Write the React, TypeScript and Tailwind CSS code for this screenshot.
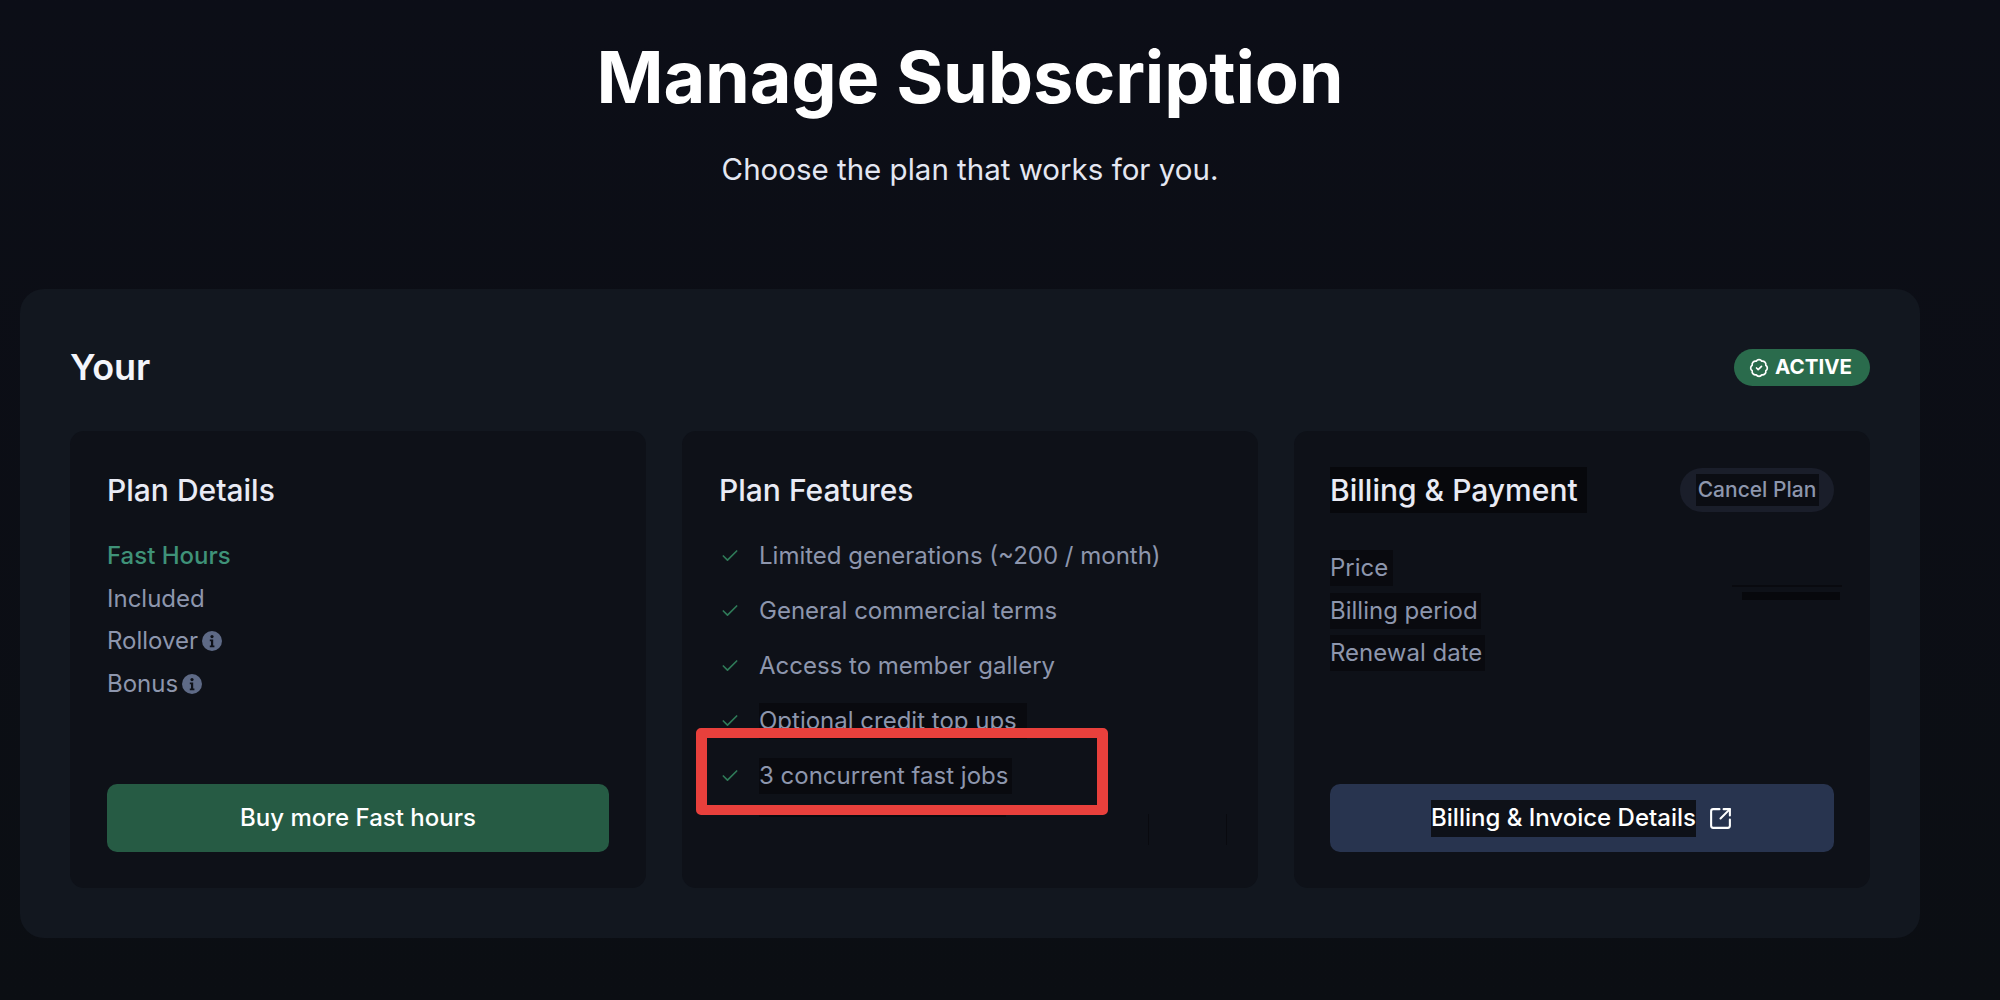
import { BadgeCheck, Check, SquareArrowOutUpRight } from "lucide-react";

const planRows = ["Included", "Rollover", "Bonus"];

const features = [
  { label: "Limited generations (~200 / month)", mark: "" },
  { label: "General commercial terms", mark: "" },
  { label: "Access to member gallery", mark: "" },
  { label: "Optional credit top ups", mark: "bg-[#090a0f] w-[268px] h-[36px] items-start" },
  { label: "3 concurrent fast jobs", mark: "bg-[#090a0f] w-[253px] h-[36px] items-center" },
];

const billingRows = [
  { label: "Price", width: "w-[63px]" },
  { label: "Billing period", width: "w-[151px]" },
  { label: "Renewal date", width: "w-[155px]" },
];

function InfoDot() {
  return (
    <svg viewBox="0 0 20 20" className="h-[20px] w-[20px] shrink-0">
      <circle cx="10" cy="10" r="10" fill="#5e6a86" />
      <circle cx="10" cy="5.6" r="1.6" fill="#0e1118" />
      <path d="M7.8 8.6h3.4v6h1.2v1.6H7.8v-1.6h1.2v-4.4H7.8z" fill="#0e1118" />
    </svg>
  );
}

export default function App() {
  return (
    <div className="relative h-[1000px] w-[2000px] overflow-hidden bg-gradient-to-b from-[#0c0e17] to-[#0b0e13] font-['Inter',sans-serif]">
      {/* Title */}
      <div className="ml-[20px] flex w-[1900px] flex-col items-center pt-[33px]">
        <h1 className="text-[72px] font-bold leading-[88px] tracking-[-0.2px] text-white">Manage Subscription</h1>
        <p className="mt-[30px] text-[29.5px] leading-[36px] text-[#e4e7f2]">Choose the plan that works for you.</p>
      </div>

      {/* Subscription card */}
      <section className="ml-[20px] mt-[102px] h-[649px] w-[1900px] rounded-[24px] bg-[#12171f] px-[50px] pt-[60px]">
        <div className="flex items-center justify-between">
          <h2 className="-translate-y-[1px] text-[36px] font-semibold leading-[36px] text-[#f3f5fb]">Your</h2>
          <div className="flex h-[37px] w-[136px] items-center justify-center gap-[6px] rounded-full bg-[#2a6b4c] pr-[3px] text-[20.5px] font-bold text-white">
            <BadgeCheck className="h-[20px] w-[20px]" strokeWidth={2} />
            ACTIVE
          </div>
        </div>

        <div className="mt-[45px] grid grid-cols-3 gap-[36px]">
          {/* Plan details */}
          <div className="flex h-[457px] flex-col rounded-[14px] bg-[#0e1118] px-[37px] pb-[36px] pt-[41px]">
            <h3 className="text-[30px] font-medium leading-[36px] text-[#e9ebf5]">Plan Details</h3>
            <div className="mt-[27px] flex flex-col text-[24px] leading-[42.6px] text-[#8d96ad]">
              <span className="font-medium text-[#3f9278]">Fast Hours</span>
              {planRows.map((row) => (
                <span key={row} className="flex items-center gap-[4px]">
                  {row}
                  {row !== "Included" && <InfoDot />}
                </span>
              ))}
            </div>
            <button className="mt-auto h-[68px] rounded-[10px] bg-[#265b44] text-[24px] font-medium text-white">
              Buy more Fast hours
            </button>
          </div>

          {/* Plan features */}
          <div className="relative flex h-[457px] flex-col rounded-[14px] bg-[#0e1118] px-[37px] pt-[41px]">
            <h3 className="text-[30px] font-medium leading-[36px] text-[#e9ebf5]">Plan Features</h3>
            <ul className="mt-[20px] flex flex-col text-[24px] text-[#8d96ad]">
              {features.map((item) => (
                <li key={item.label} className="flex h-[55px] items-center">
                  <Check className="ml-[1px] h-[20px] w-[20px] shrink-0 text-[#2f7a58]" strokeWidth={2} />
                  <span className={`ml-[19px] flex whitespace-nowrap leading-[36px] ${item.mark}`}>{item.label}</span>
                </li>
              ))}
            </ul>
            {/* annotation box over the last row */}
            <div className="absolute left-[14px] top-[297px] h-[87px] w-[412px] rounded-[5px] border-x-[11px] border-y-[10px] border-[#e8403c]" />
            <div className="absolute left-[77px] top-[384px] h-[2px] w-[247px] bg-[#090a0f]" />
            <div className="absolute left-[466px] top-[383px] h-[31px] w-[1px] bg-[#090a0f]" />
            <div className="absolute left-[544px] top-[383px] h-[31px] w-[1px] bg-[#090a0f]" />
          </div>

          {/* Billing */}
          <div className="relative flex h-[457px] flex-col rounded-[14px] bg-[#0e1118] px-[36px] pb-[36px] pt-[36px]">
            <div className="flex items-center justify-between">
              <h3 className="flex h-[46px] w-[257px] items-center whitespace-nowrap bg-[#07080c] text-[30px] font-medium text-[#e9ebf5]">
                Billing &amp; Payment
              </h3>
              <button className="flex h-[44px] w-[154px] items-center justify-center rounded-full bg-[#1a1e2a]">
                <span className="flex h-[32px] w-[123px] items-center justify-center whitespace-nowrap bg-[#0b0d13] text-[21px] font-medium text-[#8d96ad]">
                  Cancel Plan
                </span>
              </button>
            </div>
            <div className="mt-[37px] flex flex-col gap-[6.5px] text-[24px] text-[#8d96ad]">
              {billingRows.map((row) => (
                <span key={row.label} className={`flex h-[36px] items-center whitespace-nowrap bg-[#090a0f] ${row.width}`}>
                  {row.label}
                </span>
              ))}
            </div>
            <div className="absolute right-[28px] top-[154px] h-[2px] w-[110px] bg-[#090a0f]" />
            <div className="absolute right-[30px] top-[161px] h-[8px] w-[98px] bg-[#07080c]" />
            <button className="mt-auto flex h-[68px] items-center justify-center gap-[12px] rounded-[10px] bg-[#28344f] text-[24px] font-medium text-white">
              <span className="flex h-[37px] w-[265px] items-center justify-center whitespace-nowrap bg-[#0e1118]">Billing &amp; Invoice Details</span>
              <SquareArrowOutUpRight className="h-[25px] w-[25px]" strokeWidth={2} />
            </button>
          </div>
        </div>
      </section>
    </div>
  );
}
